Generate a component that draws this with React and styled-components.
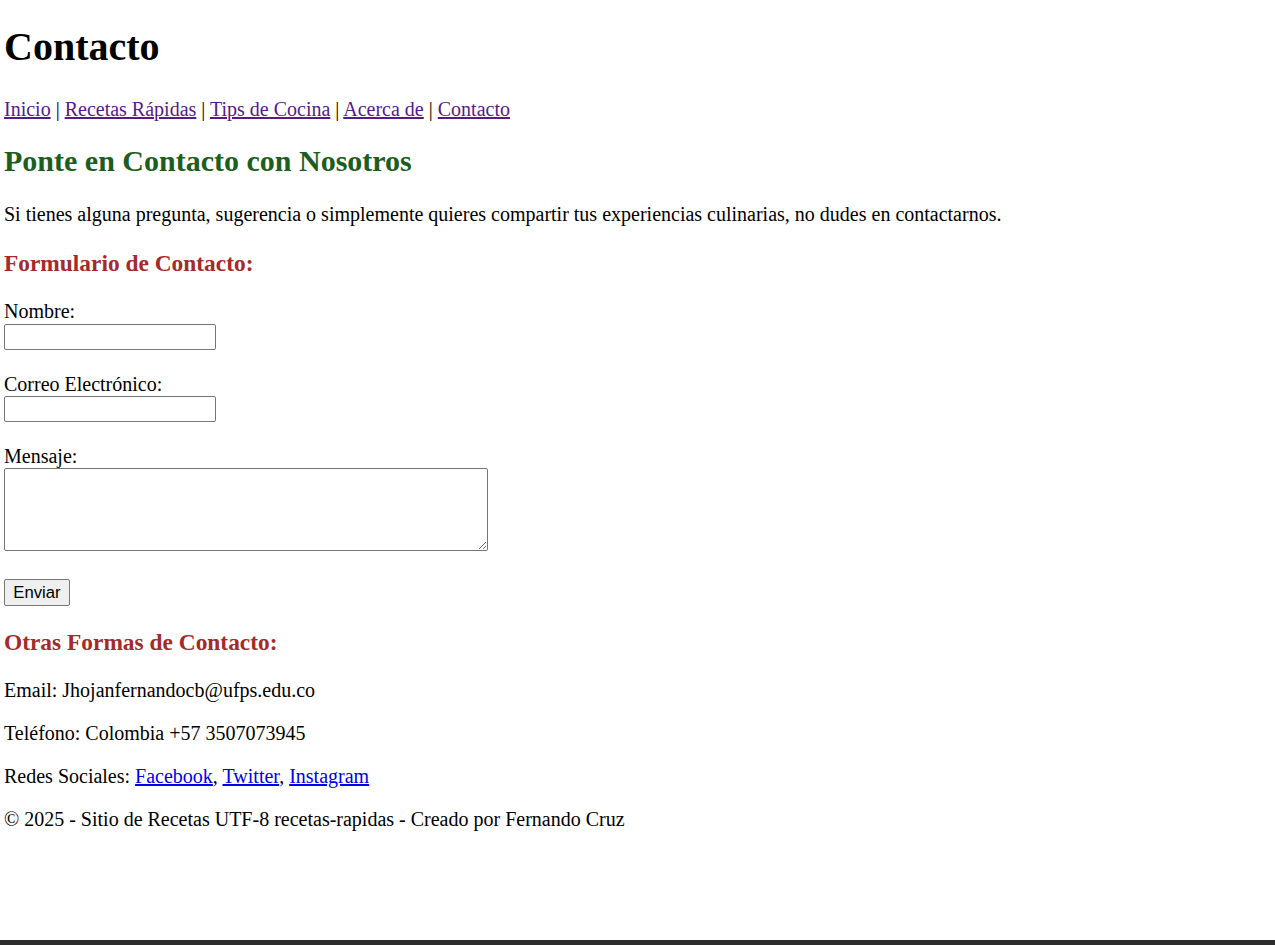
import styled, { createGlobalStyle } from 'styled-components';

const GlobalStyle = createGlobalStyle`
    html, body { margin: 0; padding: 0; background: #fff; }
    body {
        font-family: "Liberation Serif", "Times New Roman", serif;
        font-size: 20px;
        color: #000;
    }
`;

const Page = styled.div`
    min-height: 100vh;
    display: flex;
    flex-direction: column;
`;

const Content = styled.main`
    flex: 1;
    padding: 0 4px;
`;

const Title = styled.h1`
    margin: 24px 0 0;
    font-size: 40px;
    line-height: 46px;
    font-weight: bold;
`;

const Nav = styled.nav`
    margin-top: 28px;
    line-height: 23px;

    a { color: #551a8b; }
`;

const Subtitle = styled.h2`
    margin: 23px 0 0;
    font-size: 30px;
    line-height: 34px;
    color: #1b5e20;
`;

const Text = styled.p`
    margin: ${p => p.$gap || 20}px 0 0;
    line-height: 23px;

    a { color: #0000ee; }
`;

const Section = styled.h3`
    margin: ${p => p.$gap || 23}px 0 0;
    font-size: 23.4px;
    line-height: 27px;
    color: #a52a2a;
`;

const Form = styled.form`
    margin-top: 23px;
    display: flex;
    flex-direction: column;
    align-items: flex-start;
`;

const Label = styled.label`
    display: block;
    line-height: 23px;
    margin-top: ${p => p.$gap || 0}px;
`;

const Input = styled.input`
    box-sizing: border-box;
    width: 212px;
    height: 26px;
    margin: ${p => p.$top || 0}px 0 0;
    border: 1px solid #767676;
    border-radius: 2px;
    font-size: 16px;
`;

const Area = styled.textarea`
    box-sizing: border-box;
    width: 484px;
    height: 83px;
    margin: 0;
    border: 1px solid #767676;
    border-radius: 2px;
`;

const Button = styled.button`
    box-sizing: border-box;
    margin-top: 28px;
    width: 66px;
    height: 27px;
    padding: 0;
    font-family: "Liberation Sans", Arial, sans-serif;
    font-size: 16.7px;
    color: #000;
    background: #efefef;
    border: 1px solid #767676;
    border-radius: 2px;
`;

const BottomBar = styled.div`
    height: 5px;
    background: #2d2d2d;
`;

const links = ['Inicio', 'Recetas Rápidas', 'Tips de Cocina', 'Acerca de', 'Contacto'];

const App = () => (
    <Page>
        <GlobalStyle />
        <Content>
            <Title>Contacto</Title>
            <Nav>
                {links.map((l, i) => (
                    <span key={l}>
                        {i > 0 && ' | '}
                        <a href="#">{l}</a>
                    </span>
                ))}
            </Nav>

            <Subtitle>Ponte en Contacto con Nosotros</Subtitle>
            <Text $gap={25}>
                Si tienes alguna pregunta, sugerencia o simplemente quieres compartir tus experiencias culinarias, no dudes en contactarnos.
            </Text>

            <Section $gap={24}>Formulario de Contacto:</Section>
            <Form onSubmit={e => e.preventDefault()}>
                <Label htmlFor="nombre">Nombre:</Label>
                <Input id="nombre" type="text" $top={1} />
                <Label htmlFor="correo" $gap={23}>Correo Electrónico:</Label>
                <Input id="correo" type="email" />
                <Label htmlFor="mensaje" $gap={23}>Mensaje:</Label>
                <Area id="mensaje" />
                <Button type="submit">Enviar</Button>
            </Form>

            <Section>Otras Formas de Contacto:</Section>
            <Text $gap={23}>Email: Jhojanfernandocb@ufps.edu.co</Text>
            <Text>Teléfono: Colombia +57 3507073945</Text>
            <Text>
                Redes Sociales: <a href="#">Facebook</a>, <a href="#">Twitter</a>, <a href="#">Instagram</a>
            </Text>
            <Text>© 2025 - Sitio de Recetas UTF-8 recetas-rapidas - Creado por Fernando Cruz</Text>
        </Content>
        <BottomBar />
    </Page>
);

export default App;
